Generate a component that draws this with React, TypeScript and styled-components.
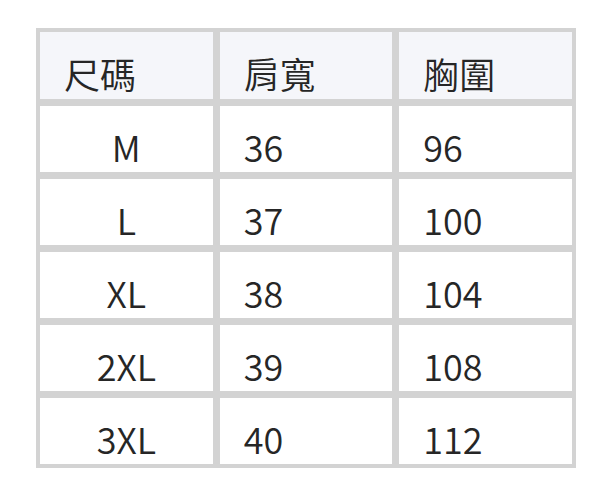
import styled, { createGlobalStyle } from "styled-components";

const GlobalStyle = createGlobalStyle`
  body {
    margin: 0;
    background: #ffffff;
    font-family: "Noto Sans CJK TC", "Noto Sans", sans-serif;
  }
`;

const Page = styled.div`
  padding: 28px 0 0 36px;
`;

const Table = styled.table`
  width: 540px;
  table-layout: fixed;
  border-collapse: separate;
  border-spacing: 1px;
  background: #d3d3d3;
  color: #262626;
  font-size: 36px;
  line-height: 36px;
`;

const Cell = styled.td<{ $center?: boolean; $head?: boolean }>`
  box-sizing: border-box;
  height: ${(p) => (p.$head ? 73 : 72)}px;
  border: 3px solid #d3d3d3;
  padding: ${(p) => (p.$head ? 23 : 22)}px 0 0 ${(p) => (p.$center ? 0 : 24)}px;
  vertical-align: top;
  text-align: ${(p) => (p.$center ? "center" : "left")};
  background: ${(p) => (p.$head ? "#f5f6fa" : "#ffffff")};
  font-weight: 350;
`;

const rows = [
  ["M", "36", "96"],
  ["L", "37", "100"],
  ["XL", "38", "104"],
  ["2XL", "39", "108"],
  ["3XL", "40", "112"],
];

export default function App() {
  return (
    <Page>
      <GlobalStyle />
      <Table>
        <thead>
          <tr>
            <Cell as="th" $head>尺碼</Cell>
            <Cell as="th" $head>肩寬</Cell>
            <Cell as="th" $head>胸圍</Cell>
          </tr>
        </thead>
        <tbody>
          {rows.map((r) => (
            <tr key={r[0]}>
              <Cell $center>{r[0]}</Cell>
              <Cell>{r[1]}</Cell>
              <Cell>{r[2]}</Cell>
            </tr>
          ))}
        </tbody>
      </Table>
    </Page>
  );
}
